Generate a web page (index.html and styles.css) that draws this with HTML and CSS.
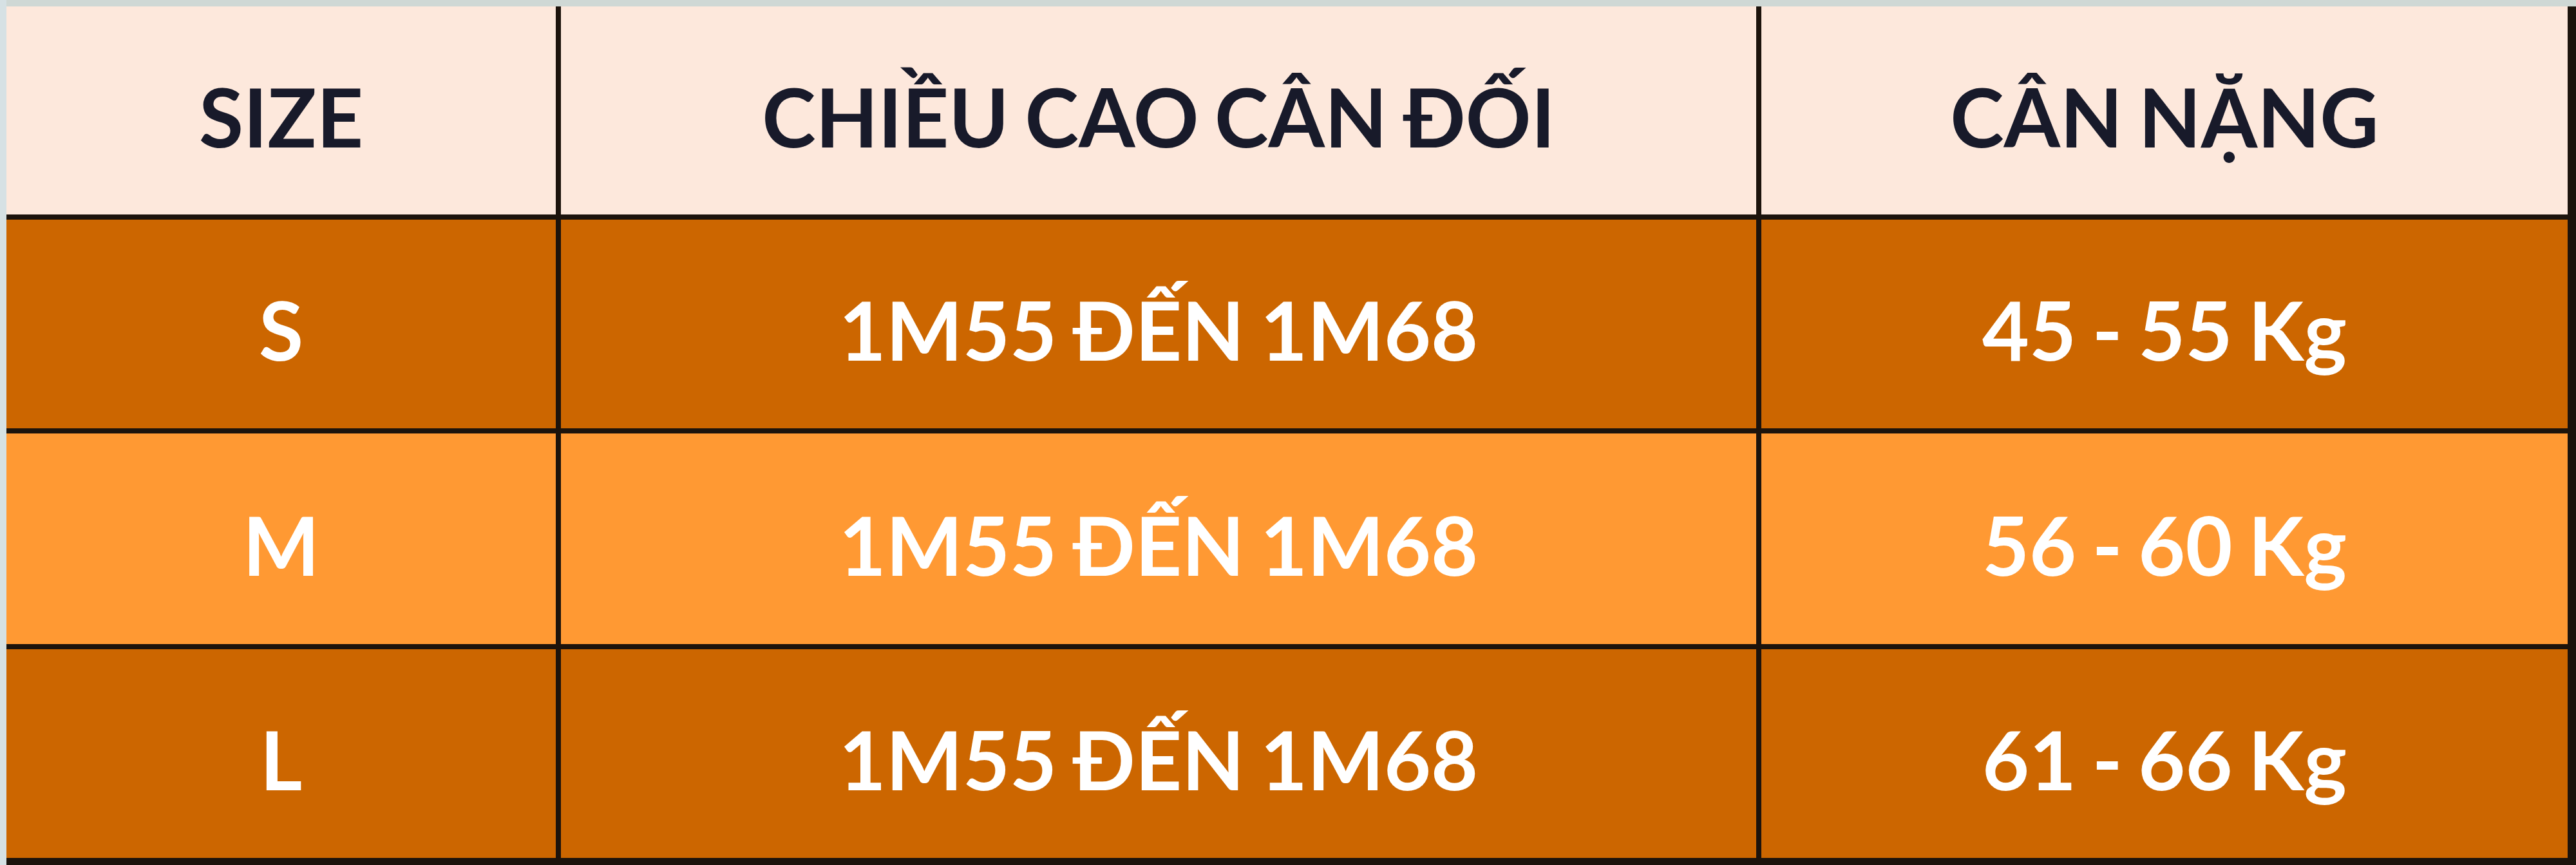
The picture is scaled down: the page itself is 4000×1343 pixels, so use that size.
FILE: index.html
```html
<!DOCTYPE html>
<html lang="vi">
<head>
<meta charset="utf-8">
<title>Bảng size</title>
<link rel="stylesheet" href="styles.css">
</head>
<body>
<div class="frame">
  <div class="size-table">
    <div class="cell head">SIZE</div>
    <div class="cell head">CHIỀU CAO CÂN ĐỐI</div>
    <div class="cell head">CÂN NẶNG</div>

    <div class="cell dark">S</div>
    <div class="cell dark">1M55 ĐẾN 1M68</div>
    <div class="cell dark">45 - 55 Kg</div>

    <div class="cell light">M</div>
    <div class="cell light">1M55 ĐẾN 1M68</div>
    <div class="cell light">56 - 60 Kg</div>

    <div class="cell dark">L</div>
    <div class="cell dark">1M55 ĐẾN 1M68</div>
    <div class="cell dark">61 - 66 Kg</div>
  </div>
</div>
</body>
</html>
```
FILE: styles.css
```css
html, body {
  margin: 0;
  padding: 0;
}
body {
  width: 4000px;
  height: 1343px;
  overflow: hidden;
  background: #d3dcda;
}
.frame {
  padding: 10px 0 0 10px;
  background: linear-gradient(to right, #d6e1e4 0 10px, transparent 10px), #cfd8d5;
  height: 1333px;
}
.size-table {
  display: grid;
  grid-template-columns: 853px 1856px 1252px;
  grid-template-rows: 323px 324px 327px 324px;
  gap: 8px;
  padding: 0 13px 11px 0;
  background: #1c130c;
  width: 3977px;
  height: 1322px;
}
.cell {
  display: flex;
  align-items: center;
  justify-content: center;
  padding-top: 18px;
  box-sizing: border-box;
  font-family: Lato, "Liberation Sans", sans-serif;
  font-weight: 700;
  font-size: 126px;
  line-height: 1.2;
  word-spacing: -6px;
  white-space: nowrap;
}
.head {
  background: #fde8dc;
  color: #181a2a;
}
.dark {
  background: #cc6600;
  color: #ffffff;
}
.light {
  background: #ff9933;
  color: #ffffff;
}
```
